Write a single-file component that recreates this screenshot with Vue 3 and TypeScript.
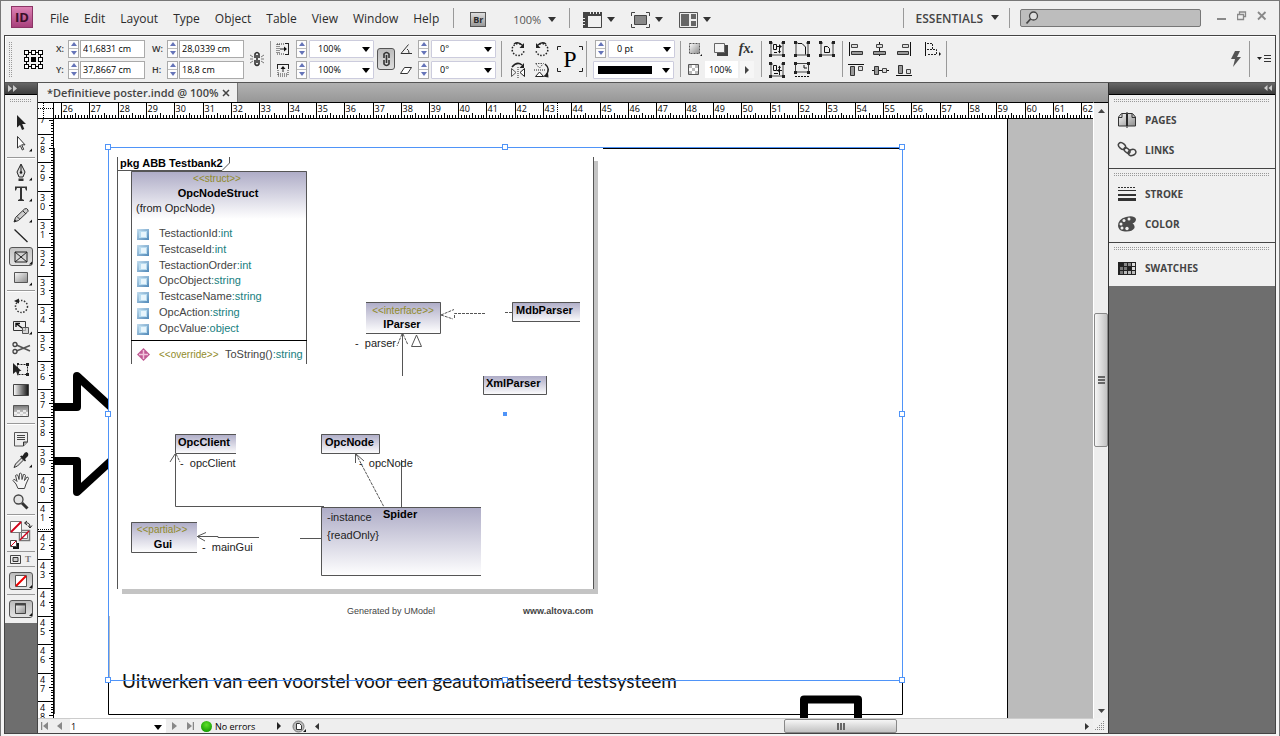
<script setup lang="ts">
import { computed, onMounted, onUnmounted, ref } from 'vue'

interface Tick { pos: number; label: string; kind: 'major' | 'half' | 'minor' }

const CM = 28.346

const viewW = ref(window.innerWidth - 242)
const viewH = ref(window.innerHeight - 138)
function measure() {
  viewW.value = window.innerWidth - 242
  viewH.value = window.innerHeight - 138
}
onMounted(() => window.addEventListener('resize', measure))
onUnmounted(() => window.removeEventListener('resize', measure))

function buildTicks(first: number, origin: number, extent: number): Tick[] {
  const out: Tick[] = []
  for (let i = 0; ; i++) {
    const pos = Math.round(origin + (i * CM) / 10) + 0.5
    if (pos > extent) return out
    if (pos < 0) continue
    out.push({
      pos,
      label: String(first + Math.floor(i / 10)),
      kind: i % 10 === 0 ? 'major' : i % 10 === 5 ? 'half' : 'minor',
    })
  }
}

const hTicks = computed(() => buildTicks(25, 7 - CM, viewW.value))
const vTicks = computed(() => buildTicks(27, 15 - CM, viewH.value))
const hMajor = computed(() => hTicks.value.filter((t) => t.kind === 'major'))
const vMajor = computed(() => vTicks.value.filter((t) => t.kind === 'major'))
const hLen = { major: 0, half: 10, minor: 12 }
const vLen = { major: 0, half: 11, minor: 13 }

const menus = ['File', 'Edit', 'Layout', 'Type', 'Object', 'Table', 'View', 'Window', 'Help']

const x = ref('41,6831 cm')
const y = ref('37,8667 cm')
const w = ref('28,0339 cm')
const h = ref('18,8 cm')

const toolGroups: { id: string; label: string; more?: boolean }[][] = [
  [{ id: 'select', label: 'Selection' }, { id: 'direct', label: 'Direct selection', more: true }],
  [
    { id: 'pen', label: 'Pen', more: true },
    { id: 'type', label: 'Type', more: true },
    { id: 'pencil', label: 'Pencil', more: true },
    { id: 'line', label: 'Line' },
    { id: 'frame', label: 'Rectangle frame', more: true },
    { id: 'rect', label: 'Rectangle', more: true },
  ],
  [
    { id: 'rotate', label: 'Rotate' },
    { id: 'scale', label: 'Scale', more: true },
    { id: 'scissors', label: 'Scissors' },
    { id: 'transform', label: 'Free transform' },
    { id: 'gradient', label: 'Gradient' },
    { id: 'feather', label: 'Gradient feather' },
  ],
  [
    { id: 'note', label: 'Note' },
    { id: 'eyedropper', label: 'Eyedropper', more: true },
    { id: 'hand', label: 'Hand' },
    { id: 'zoom', label: 'Zoom' },
  ],
]
const activeTool = ref('frame')

const panelGroups = [
  [{ id: 'pages', label: 'PAGES' }, { id: 'links', label: 'LINKS' }],
  [{ id: 'stroke', label: 'STROKE' }, { id: 'color', label: 'COLOR' }],
  [{ id: 'swatches', label: 'SWATCHES' }],
]

const fields = [
  { name: 'TestactionId', type: 'int' },
  { name: 'TestcaseId', type: 'int' },
  { name: 'TestactionOrder', type: 'int' },
  { name: 'OpcObject', type: 'string' },
  { name: 'TestcaseName', type: 'string' },
  { name: 'OpcAction', type: 'string' },
  { name: 'OpcValue', type: 'object' },
].map((f, i) => ({ ...f, y: Math.round(233 + i * 15.8) }))

const handles = [
  [108, 147], [505, 147], [902, 147], [108, 414], [902, 414], [108, 680], [505, 680], [902, 680],
]
const refPoints = [0, 1, 2].flatMap((r) => [0, 1, 2].map((c) => ({ c, r })))
</script>

<template>
  <div class="app">
    <svg class="defs" width="0" height="0" aria-hidden="true">
      <defs>
        <linearGradient id="gMetal" x1="0" y1="0" x2="1" y2="1"><stop offset="0" stop-color="#fafafa" /><stop offset="1" stop-color="#8c8c8c" /></linearGradient>
        <linearGradient id="gBw" x1="0" x2="1"><stop offset="0" stop-color="#fff" /><stop offset="1" stop-color="#111" /></linearGradient>
        <linearGradient id="gFade" x1="0" y1="0" x2="0" y2="1"><stop offset="0" stop-color="#777" /><stop offset="1" stop-color="#eee" /></linearGradient>
        <linearGradient id="gClass" x1="0" y1="0" x2="0" y2="1"><stop offset="0" stop-color="#adabc6" /><stop offset="1" stop-color="#fff" /></linearGradient>
        <linearGradient id="gField" x1="0" y1="0" x2="1" y2="1"><stop offset="0" stop-color="#c4deef" /><stop offset="1" stop-color="#4f88b8" /></linearGradient>
        <symbol id="caret" viewBox="0 0 8 6"><path d="M0 0H8L4 5Z" fill="currentColor" /></symbol>

        <symbol id="t-select" viewBox="0 0 24 20"><path d="M8 2V14.500L11 12L13 17L15.300 16L13.200 11H17Z" fill="#222" /></symbol>
        <symbol id="t-direct" viewBox="0 0 24 20"><path d="M8.500 2.500V14L11.300 11.500L13.300 16L14.700 15.300L12.700 10.800H16Z" fill="#fff" stroke="#333" /></symbol>
        <symbol id="t-pen" viewBox="0 0 24 20"><path d="M12 1L8 9L10 14H14L16 9Z" fill="#ddd" stroke="#222" /><path d="M12 2V9" stroke="#222" /><circle cx="12" cy="9.500" r="1.300" fill="#222" /><path d="M9.500 15.500H14.500V18H9.500Z" fill="#333" /></symbol>
        <symbol id="t-type" viewBox="0 0 24 20"><path d="M6 2.500H18V6.500H17L16 4H13V15L15 16V17H9V16L11 15V4H8L7 6.500H6Z" fill="#333" /></symbol>
        <symbol id="t-pencil" viewBox="0 0 24 20"><path d="M5 17L6.500 12.500L15.500 4Q18 2.500 19 5Q19.500 6.500 18 7.500L9.500 15.500Z" fill="#ccc" stroke="#333" /><path d="M14 6L17 9M8 11.500L10.500 14" stroke="#333" /><path d="M5 17L6 14.500L7.500 16Z" fill="#222" /></symbol>
        <symbol id="t-line" viewBox="0 0 24 20"><path d="M5.500 3.500L18.500 16" stroke="#222" stroke-width="1.300" /></symbol>
        <symbol id="t-frame" viewBox="0 0 24 20"><path d="M6 5H18V15H6ZM6 5L18 15M18 5L6 15" fill="none" stroke="#222" /></symbol>
        <symbol id="t-rect" viewBox="0 0 24 20"><path d="M5.500 4.500H18.500V14.500H5.500Z" fill="url(#gMetal)" stroke="#555" /></symbol>
        <symbol id="t-rotate" viewBox="0 0 24 20"><circle cx="12.500" cy="10.500" r="6" fill="none" stroke="#333" stroke-width="1.500" stroke-dasharray="1.500 1.500" /><path d="M5 5L10 2.500V7.500Z" fill="#222" /></symbol>
        <symbol id="t-scale" viewBox="0 0 24 20"><path d="M4.500 4.500H16.500V13.500H4.500Z" fill="#eee" stroke="#333" /><path d="M7 6.500L13 11M7 10V6.500H11" fill="none" stroke="#111" stroke-width="1.400" /><path d="M13.500 10.500H19.500V16.500H13.500Z" fill="#ccc" fill-opacity=".7" stroke="#555" /></symbol>
        <symbol id="t-scissors" viewBox="0 0 24 20"><path d="M7.500 7L21 13M7.500 13L21 7.500" stroke="#555" stroke-width="1.600" /><circle cx="6" cy="6.500" r="2" fill="none" stroke="#444" stroke-width="1.300" /><circle cx="6" cy="13.500" r="2" fill="none" stroke="#444" stroke-width="1.300" /></symbol>
        <symbol id="t-transform" viewBox="0 0 24 20"><path d="M8.500 5.500H18.500V15.500H8.500Z" fill="none" stroke="#222" stroke-dasharray="2 1" /><path d="M17 4h3v3h-3zM17 14h3v3h-3zM8 4h2v2H8z" fill="#222" /><path d="M4 4V15L7 12.500L9 17L10.500 12H12.500Z" fill="#222" /></symbol>
        <symbol id="t-gradient" viewBox="0 0 24 20"><path d="M4.500 4.500H19.500V15.500H4.500Z" fill="url(#gBw)" stroke="#444" /></symbol>
        <symbol id="t-feather" viewBox="0 0 24 20"><path d="M4.500 4.500H19.500V15.500H4.500Z" fill="url(#gFade)" stroke="#555" /><path d="M5 11h3v2H5zM11 11h3v2h-3zM17 11h2v2h-2zM8 13h3v2H8zM14 13h3v2h-3zM8 9h3v2H8zM14 9h3v2h-3z" fill="#fff" fill-opacity=".7" /></symbol>
        <symbol id="t-note" viewBox="0 0 24 20"><path d="M5.500 3.500H18.500V13L14.500 17H5.500Z" fill="#eee" stroke="#555" /><path d="M14.500 17V13H18.500" fill="#aaa" stroke="#333" /><path d="M8 6.500H16M8 8.500H16M8 10.500H16" stroke="#444" /></symbol>
        <symbol id="t-eyedropper" viewBox="0 0 24 20"><path d="M5 17.500L6.500 14L12.500 8L14.500 10L8.500 16Z" fill="#ddd" stroke="#333" /><path d="M11 6.500L16 11.500L17 10.500L16 9L19 6Q20 3 17.500 2Q15.500 2 14.500 4.500L13.500 6L12.500 5.500Z" fill="#222" /></symbol>
        <symbol id="t-hand" viewBox="0 0 24 20"><path d="M9 17.500L7 13L4 9.500Q4.500 7.500 6.500 9L8 10.500L6.500 4.500Q8 3 9 4.500L10 8.500L10.500 2.500Q12 1.500 12.700 3L13 8.500L14.500 3.500Q16 3 16.500 4.500L15.500 9.500L18 6Q19.500 6 19.500 7.500L17 13L15.500 17.500Z" fill="#f4f4f4" stroke="#444" /></symbol>
        <symbol id="t-zoom" viewBox="0 0 24 20"><circle cx="9.500" cy="7.500" r="4.500" fill="#e4e4e4" stroke="#444" stroke-width="1.300" /><path d="M13 11L18.500 16.500" stroke="#333" stroke-width="3" /></symbol>

        <symbol id="p-pages" viewBox="0 0 20 18"><path d="M1.500 15V6L4.500 2.500H9.500V15ZM18.500 15V6L15.500 2.500H10.500V15Z" fill="url(#gMetal)" stroke="#333" /><path d="M1.500 6.500H5V3M18.500 6.500H15V3" fill="none" stroke="#333" /><path d="M10 1V17" stroke="#222" /></symbol>
        <symbol id="p-links" viewBox="0 0 20 18"><g fill="none" stroke="#444" stroke-width="1.500"><ellipse cx="5" cy="5" rx="4" ry="2.800" transform="rotate(40 5 5)" /><ellipse cx="10" cy="9.500" rx="3.500" ry="2" transform="rotate(40 10 9.500)" /><ellipse cx="15" cy="11.500" rx="4" ry="3" transform="rotate(-20 15 11.500)" /></g></symbol>
        <symbol id="p-stroke" viewBox="0 0 20 18"><path d="M1 2.500H19" stroke="#333" stroke-dasharray="2 1" /><path d="M1 5.500H19" stroke="#333" /><path d="M1 10H19" stroke="#333" stroke-width="2" /><path d="M1 14.500H19" stroke="#333" stroke-width="3" /></symbol>
        <symbol id="p-color" viewBox="0 0 20 18"><path d="M1 11Q1 4 9 2Q17 0 19 4Q19 7 15.500 8.500Q18 10 17.500 13Q15 17 8 16.500Q1.500 16 1 11Z" fill="#4a4a4a" /><g fill="#eee"><circle cx="4" cy="9" r="1.500" /><circle cx="7" cy="5.500" r="1.500" /><circle cx="12" cy="4" r="1.500" /><circle cx="5" cy="13" r="1.500" /><circle cx="10" cy="13.500" r="1.700" /></g></symbol>
        <symbol id="p-swatches" viewBox="0 0 20 18"><path d="M1 3H19V16H1Z" fill="#222" /><path d="M7 4h3v3H7z M11 4h3v3h-3z" fill="#888" /><path d="M15 4h3v3h-3zM15 8h3v3h-3z" fill="#ddd" /><path d="M3 8h3v3H3zM7 8h3v3H7zM3 12h3v3H3z" fill="#777" /><path d="M7 12h3v3H7zM11 12h3v3h-3zM15 12h3v3h-3z" fill="#bbb" /></symbol>

        <symbol id="corners" viewBox="0 0 16 16"><path d="M2 2V14M14 2V14M2 2H4M12 2H14M2 14H14" fill="none" stroke="#444" /><path d="M0 0h3v3H0zM13 0h3v3h-3zM0 13h3v3H0zM13 13h3v3h-3z" fill="#222" /></symbol>
      </defs>
    </svg>

    <header class="menubar">
      <div class="logo"><span>ID</span></div>
      <nav class="menus" aria-label="Main menu">
        <button v-for="m in menus" :key="m" type="button">{{ m }}</button>
      </nav>
      <i class="vsep" />
      <button type="button" class="bridge">Br</button>
      <button type="button" class="zoomlevel">100% <svg class="caret"><use href="#caret" /></svg></button>
      <i class="vsep" />
      <button type="button" class="viewbtn" aria-label="View options">
        <svg width="19" height="16"><path d="M0 0H19V4H5V16H0Z" fill="#444" /><path d="M.5.500H18.500V15.500H.5Z" fill="none" stroke="#444" /><path d="M7.500 0V2M10.500 0V2M13.500 0V2M16.500 0V2M0 6.500H2M0 9.500H2M0 12.500H2" stroke="#eee" /></svg>
        <svg class="caret"><use href="#caret" /></svg>
      </button>
      <button type="button" class="viewbtn" aria-label="Screen mode">
        <svg width="19" height="16"><path d="M.5 4V.5H4M15 .5H18.500V4M18.500 12V15.500H15M4 15.500H.5V12" fill="none" stroke="#444" /><path d="M3.500 3.500H15.500V12.500H3.500Z" fill="#888" stroke="#444" /></svg>
        <svg class="caret"><use href="#caret" /></svg>
      </button>
      <button type="button" class="viewbtn" aria-label="Arrange documents">
        <svg width="19" height="16"><path d="M.5.500H18.500V15.500H.5Z" fill="#eee" stroke="#555" /><path d="M2 2H10V14H2ZM12 2H17V7H12ZM12 9H17V14H12Z" fill="#666" /></svg>
        <svg class="caret"><use href="#caret" /></svg>
      </button>
      <div class="grow" />
      <i class="vsep" />
      <button type="button" class="workspace-name">ESSENTIALS <svg class="caret"><use href="#caret" /></svg></button>
      <i class="vsep" />
      <label class="search">
        <svg width="14" height="14"><circle cx="8.500" cy="5" r="4" fill="#ddd" stroke="#444" stroke-width="1.300" /><path d="M5.500 8L1.500 12.500" stroke="#444" stroke-width="1.800" /></svg>
        <input type="search" aria-label="Search" />
      </label>
      <div class="winbtns">
        <button type="button" aria-label="Minimize"><svg width="10" height="10"><path d="M0 8H9" stroke="#888" stroke-width="2" /></svg></button>
        <button type="button" aria-label="Restore"><svg width="10" height="10"><path d="M2.500 3V1H8.500V5.500H7M.5 3.500H6.500V8.500H.5Z" fill="none" stroke="#888" stroke-width="1.300" /></svg></button>
        <button type="button" aria-label="Close"><svg width="10" height="10"><path d="M1 1L8.500 8.500M8.500 1L1 8.500" stroke="#888" stroke-width="1.800" /></svg></button>
      </div>
    </header>

    <div class="shell">
      <section class="control" aria-label="Control panel">
        <i class="grip-v" />
        <svg class="refpoint" width="19" height="19" shape-rendering="crispEdges">
          <path d="M2.500 2.500H16.500V16.500H2.500Z" fill="none" stroke="#000" />
          <rect v-for="p in refPoints" :key="`${p.c}${p.r}`" :x="p.c * 7 + 0.5" :y="p.r * 7 + 0.5" width="4" height="4" :fill="p.c === 1 && p.r === 1 ? '#000' : '#fff'" stroke="#000" />
        </svg>

        <div class="pair coords">
          <label for="fx">X:</label>
          <span class="spin"><button type="button" aria-label="Increase X" /><button type="button" aria-label="Decrease X" /></span>
          <input id="fx" v-model="x" />
          <label for="fy">Y:</label>
          <span class="spin"><button type="button" aria-label="Increase Y" /><button type="button" aria-label="Decrease Y" /></span>
          <input id="fy" v-model="y" />
        </div>
        <div class="pair coords size">
          <label for="fw">W:</label>
          <span class="spin"><button type="button" aria-label="Increase width" /><button type="button" aria-label="Decrease width" /></span>
          <input id="fw" v-model="w" />
          <label for="fh">H:</label>
          <span class="spin"><button type="button" aria-label="Increase height" /><button type="button" aria-label="Decrease height" /></span>
          <input id="fh" v-model="h" />
        </div>
        <button type="button" class="ico unlink" aria-label="Constrain proportions">
          <svg width="14" height="16"><path d="M5 7V3Q7 0 9 3V7M5 9V13Q7 16 9 13V9M7 4V12" fill="none" stroke="#333" stroke-width="1.600" /><path d="M0 4L3 6M14 4L11 6M0 12L3 10M14 12L11 10M0 8H3M11 8H14" stroke="#777" /></svg>
        </button>
        <i class="csep" />
        <div class="pair scale">
          <svg width="14" height="14"><path d="M1 2V12M3 2V12M1 2H9M1 12H9" stroke="#333" stroke-dasharray="1 1" /><path d="M12.500 1V13M4 7H10M9 1.500H13M9 12.500H13" stroke="#222" fill="none" /><path d="M8 4.500L11 7L8 9.500Z" fill="#111" /></svg>
          <span class="spin"><button type="button" aria-label="Increase X scale" /><button type="button" aria-label="Decrease X scale" /></span>
          <span class="drop"><select aria-label="X scale"><option>100%</option></select><svg class="dcaret"><use href="#caret" /></svg></span>
          <svg width="14" height="14"><path d="M2 7V13M12 7V13M2 13H12M2 11H12" stroke="#333" stroke-dasharray="1 1" /><path d="M1 1.500H13M7 4V9M1.500 1V6M12.500 1V6" stroke="#222" /><path d="M4.500 6L7 3L9.500 6Z" fill="#111" /></svg>
          <span class="spin"><button type="button" aria-label="Increase Y scale" /><button type="button" aria-label="Decrease Y scale" /></span>
          <span class="drop"><select aria-label="Y scale"><option>100%</option></select><svg class="dcaret"><use href="#caret" /></svg></span>
        </div>
        <button type="button" class="linkbtn" aria-label="Link scaling">
          <svg width="9" height="16"><path d="M2 7V3Q4.500 0 7 3V7M2 9V13Q4.500 16 7 13V9M4.500 4V12" fill="none" stroke="#333" stroke-width="1.600" /></svg>
        </button>
        <div class="pair angle">
          <svg width="14" height="14"><path d="M9.500 2.500L2 11.500H13M8 7Q10 8 10 11" fill="none" stroke="#333" /></svg>
          <span class="spin"><button type="button" aria-label="Increase rotation" /><button type="button" aria-label="Decrease rotation" /></span>
          <span class="drop"><select aria-label="Rotation"><option>0°</option></select><svg class="dcaret"><use href="#caret" /></svg></span>
          <svg width="14" height="14"><path d="M1.500 10.500L5.500 4.500H12.500L8.500 10.500Z" fill="#fff" stroke="#333" /></svg>
          <span class="spin"><button type="button" aria-label="Increase shear" /><button type="button" aria-label="Decrease shear" /></span>
          <span class="drop"><select aria-label="Shear"><option>0°</option></select><svg class="dcaret"><use href="#caret" /></svg></span>
        </div>
        <i class="csep" />
        <div class="pair icons2">
          <button type="button" class="ico" aria-label="Rotate clockwise"><svg width="16" height="16"><path d="M13 5A6 6 0 1 0 14 10" fill="none" stroke="#222" stroke-width="1.500" stroke-dasharray="1.500 1.500" /><path d="M4 3Q8 0 12 4" fill="none" stroke="#222" stroke-width="1.500" /><path d="M14 2V7H9.500Z" fill="#222" /></svg></button>
          <button type="button" class="ico" aria-label="Rotate counterclockwise"><svg width="16" height="16"><path d="M3 5A6 6 0 1 1 2 10" fill="none" stroke="#222" stroke-width="1.500" stroke-dasharray="1.500 1.500" /><path d="M12 3Q8 0 4 4" fill="none" stroke="#222" stroke-width="1.500" /><path d="M2 2V7H6.500Z" fill="#222" /></svg></button>
          <button type="button" class="ico" aria-label="Flip horizontal"><svg width="16" height="16"><path d="M2 5Q7-1 12 3" fill="none" stroke="#222" stroke-width="1.500" /><path d="M14 1V6H9.500Z" fill="#222" /><path d="M1.500 6.500V14.500L6 10.500Z" fill="none" stroke="#555" /><path d="M14.500 6.500V14.500L10 10.500Z" fill="#fff" stroke="#222" /><path d="M8 5V16" stroke="#222" stroke-dasharray="1 1" /></svg></button>
          <button type="button" class="ico" aria-label="Flip vertical"><svg width="16" height="16"><path d="M11 2Q17 7 12 13" fill="none" stroke="#222" stroke-width="1.500" /><path d="M9 14.500L14.500 15.500L14 10.500Z" fill="#222" /><path d="M1.500 1.500H9.500L5.500 6Z" fill="none" stroke="#555" stroke-dasharray="1.500 1" /><path d="M1.500 14.500H9.500L5.500 10Z" fill="#fff" stroke="#222" /><path d="M0 8H12" stroke="#222" stroke-dasharray="1 1" /></svg></button>
        </div>
        <div class="pbox"><svg width="26" height="26"><path d="M.5 4V.5H4M22 .5H25.500V4M25.500 22V25.500H22M4 25.500H.5V22" fill="none" stroke="#222" /></svg><span>P</span></div>
        <i class="csep" />
        <div class="strokes">
          <span class="row"><span class="spin"><button type="button" aria-label="Increase weight" /><button type="button" aria-label="Decrease weight" /></span>
            <span class="drop"><select aria-label="Stroke weight"><option>0 pt</option></select><svg class="dcaret"><use href="#caret" /></svg></span></span>
          <span class="drop wide"><select class="solid" aria-label="Stroke type"><option aria-label="Solid" /></select><svg class="dcaret"><use href="#caret" /></svg></span>
        </div>
        <i class="csep" />
        <div class="effects">
          <span class="row">
            <button type="button" class="ico" aria-label="Corner options"><svg width="16" height="16"><path d="M2.500 2.500H12.500V12.500H2.500Z" fill="url(#gMetal)" stroke="#555" stroke-dasharray="2 1" /><path d="M13 15H15V13Z" fill="#111" /></svg></button>
            <button type="button" class="ico" aria-label="Drop shadow"><svg width="16" height="16"><path d="M4 4H15V15H4Z" fill="#444" /><path d="M1.500 2.500H11.500V11.500H1.500Z" fill="#f4f4f4" stroke="#666" /></svg></button>
            <button type="button" class="ico fx" aria-label="Effects">fx<small>.</small></button>
          </span>
          <span class="row">
            <button type="button" class="ico" aria-label="Opacity"><svg width="16" height="16"><path d="M1.500 2.500H11.500V12.500H1.500Z" fill="#fff" stroke="#555" /><path d="M2 3h3v3H2zM8 3h3v3H8zM5 6h3v3H5zM2 9h3v3H2zM8 9h3v3H8z" fill="#bbb" /></svg></button>
            <input class="opacity" aria-label="Opacity value" value="100%" />
            <button type="button" class="ico oparrow" aria-label="Opacity slider"><svg width="5" height="8"><path d="M0 0L4 4L0 8Z" fill="#444" /></svg></button>
          </span>
        </div>
        <i class="csep" />
        <div class="pair icons3">
          <button type="button" class="ico" aria-label="Fill frame proportionally"><svg width="16" height="16"><use href="#corners" /><path d="M4.500 3.500H7.500V8.500H4.500ZM8 5.500H12M10.500 3.500V12M5 11.500H8" fill="none" stroke="#111" /><path d="M9 10L10.500 12.500L12 10ZM11 4L13 5.500L11 7Z" fill="#111" /></svg></button>
          <button type="button" class="ico" aria-label="Fit content to frame"><svg width="16" height="16"><use href="#corners" /><path d="M4 2.500H8L11.500 6V13.500" fill="none" stroke="#111" /></svg></button>
          <button type="button" class="ico" aria-label="Center content"><svg width="16" height="16"><use href="#corners" /><path d="M5.500 5.500H8.500L10.500 7.500V11.500H5.500Z" fill="#eee" stroke="#111" /></svg></button>
          <button type="button" class="ico" aria-label="Fit content proportionally"><svg width="16" height="16"><use href="#corners" /><path d="M4.500 3.500H7.500V8.500H4.500ZM8 8.500H13M10.500 4V13M5 11.500H9" fill="none" stroke="#111" /><path d="M9 6L10.500 3.500L12 6ZM10 7L8 8.500L10 10Z" fill="#111" /></svg></button>
          <button type="button" class="ico" aria-label="Fit frame to content"><svg width="16" height="16"><path d="M1.500 10V1.500H14.500V10Z" fill="#eee" stroke="#444" /><path d="M0 0h3v3H0zM13 0h3v3h-3zM0 9h3v3H0zM13 9h3v3h-3z" fill="#222" /><path d="M10 3V6H13" fill="none" stroke="#111" /><path d="M1 14.500H15" stroke="#111" stroke-dasharray="2 1" /></svg></button>
        </div>
        <i class="csep" />
        <div class="pair aligns">
          <button type="button" class="ico" aria-label="Align left"><svg width="16" height="16"><path d="M1.500 1V15" stroke="#111" /><path d="M3.500 3.500H9.500V6.500H3.500Z" fill="#ddd" stroke="#444" /><path d="M3.500 10.500H14.500V13.500H3.500Z" fill="#999" stroke="#333" /></svg></button>
          <button type="button" class="ico" aria-label="Align horizontal centers"><svg width="16" height="16"><path d="M7.500 1V15" stroke="#111" /><path d="M4.500 3.500H10.500V6.500H4.500Z" fill="#ddd" stroke="#444" /><path d="M1.500 10.500H13.500V13.500H1.500Z" fill="#999" stroke="#333" /></svg></button>
          <button type="button" class="ico" aria-label="Align right"><svg width="16" height="16"><path d="M14.500 1V15" stroke="#111" /><path d="M6.500 3.500H12.500V6.500H6.500Z" fill="#ddd" stroke="#444" /><path d="M1.500 10.500H12.500V13.500H1.500Z" fill="#999" stroke="#333" /></svg></button>
          <button type="button" class="ico" aria-label="Align to"><svg width="18" height="16"><path d="M1.500 1V15" stroke="#111" /><path d="M3 2.500H8.500V8M3 8.500H12.500V13.500H3" fill="none" stroke="#222" stroke-dasharray="2 1" /><path d="M15 11L17 13L15 15Z" fill="#111" /></svg></button>
          <button type="button" class="ico" aria-label="Align top"><svg width="16" height="16"><path d="M0 2.500H16" stroke="#111" /><path d="M2.500 4.500H6.500V13.500H2.500Z" fill="#999" stroke="#333" /><path d="M10.500 4.500H14.500V8.500H10.500Z" fill="#ddd" stroke="#444" /></svg></button>
          <button type="button" class="ico" aria-label="Align vertical centers"><svg width="17" height="16"><path d="M0 8.500H17" stroke="#111" /><path d="M2.500 4.500H6.500V12.500H2.500Z" fill="#999" stroke="#333" /><path d="M10.500 6.500H14.500V10.500H10.500Z" fill="#ddd" stroke="#444" /></svg></button>
          <button type="button" class="ico" aria-label="Align bottom"><svg width="16" height="16"><path d="M0 13.500H16" stroke="#111" /><path d="M2.500 3.500H6.500V11.500H2.500Z" fill="#999" stroke="#333" /><path d="M10.500 7.500H14.500V11.500H10.500Z" fill="#ddd" stroke="#444" /></svg></button>
        </div>
        <i class="csep" />
        <div class="grow" />
        <button type="button" class="ico bolt" aria-label="Quick apply"><svg width="12" height="16"><path d="M5 0L1 8L5 8L3 16L11 6H7L10 0Z" fill="#555" /></svg></button>
        <i class="csep" />
        <button type="button" class="ico flyout" aria-label="Panel menu"><svg width="15" height="10"><path d="M0 3H5L2.500 6Z" fill="#222" /><path d="M7 1.500H14M7 4.500H14M7 7.500H14" stroke="#333" /></svg></button>
      </section>

      <div class="body">
        <aside class="tools" aria-label="Tools">
          <div class="dark-head"><svg width="9" height="7"><path d="M0 0L4 3.500L0 7ZM5 0L9 3.500L5 7Z" fill="#ccc" /></svg></div>
          <div class="toolbox">
            <i class="grip-h" />
            <div v-for="(g, gi) in toolGroups" :key="gi" class="tgroup">
              <button v-for="t in g" :key="t.id" type="button" :class="{ active: activeTool === t.id }" :aria-label="t.label" @click="activeTool = t.id">
                <svg width="24" height="20"><use :href="`#t-${t.id}`" /><path v-if="t.more" d="M20 17.500H23V14.500Z" fill="#111" /></svg>
              </button>
            </div>
            <div class="fillbox">
              <svg width="24" height="30">
                <path d="M10.500 10.500H20.500V20.500H10.500Z" fill="#fff" stroke="#777" stroke-width="1.500" /><path d="M12.500 12.500H18.500V18.500H12.500Z" fill="#fff" stroke="#777" /><path d="M11 20L20 11" stroke="#d0021b" stroke-width="1.500" />
                <path d="M1.500 1.500H12.500V12.500H1.500Z" fill="#fff" stroke="#777" /><path d="M2 12L12 2" stroke="#d0021b" stroke-width="1.800" />
                <path d="M16 3Q21 2 21 7M19 5.500L21 8L23 5.500M18 1L15.500 3L18 5" fill="none" stroke="#222" />
                <path d="M4 23H10V29H4Z" fill="#111" /><path d="M1.500 20.500H7.500V26.500H1.500Z" fill="#fff" stroke="#444" /><path d="M2 26L7 21" stroke="#d0021b" />
              </svg>
            </div>
            <div class="modes">
              <button type="button" aria-label="Formatting affects container"><svg width="11" height="9"><path d="M.5.500H10.500V8.500H.5Z" fill="none" stroke="#444" /><path d="M3 2.500H8V6.500H3Z" fill="#ccc" stroke="#333" /></svg></button>
              <button type="button" class="tmode">T</button>
            </div>
            <div class="big"><button type="button" aria-label="Apply none"><svg width="24" height="18"><path d="M6.500 3.500H17.500V14.500H6.500Z" fill="#fff" stroke="#555" /><path d="M7 14L17 4" stroke="#e00" stroke-width="2" /><path d="M20 16H23V13Z" fill="#111" /></svg></button></div>
            <div class="big"><button type="button" aria-label="View mode"><svg width="24" height="18"><path d="M6.500 3.500H16.500V13.500H6.500Z" fill="url(#gMetal)" stroke="#444" /><path d="M6 4.500H17" stroke="#444" stroke-width="2" /><path d="M20 16H23V13Z" fill="#111" /></svg></button></div>
          </div>
        </aside>

        <main class="doc">
          <div class="tabs">
            <div class="tab"><span>*Definitieve poster.indd @ 100%</span><button type="button" aria-label="Close document"><svg width="8" height="8"><path d="M1 1L7 7M7 1L1 7" stroke="#444" stroke-width="1.500" /></svg></button></div>
          </div>
          <div class="viewgrid">
            <svg class="corner" shape-rendering="crispEdges"><path d="M5.500 0V16M0 5.500H15" stroke="#000" stroke-dasharray="1 1" /></svg>
            <svg class="hruler">
              <path v-for="(t, i) in hTicks" :key="i" :d="`M${t.pos} ${hLen[t.kind]}V15`" stroke="#000" />
              <text v-for="t in hMajor" :key="t.label" :x="t.pos + 1" y="9">{{ t.label }}</text>
              <path d="M503.500 0V16" stroke="#000" stroke-dasharray="1 1" />
            </svg>
            <div class="vscroll">
              <button type="button" aria-label="Scroll up"><svg width="7" height="4"><path d="M0 4L3.500 0L7 4Z" fill="#444" /></svg></button>
              <div class="track"><span class="thumb"><i /><i /><i /></span></div>
              <button type="button" aria-label="Scroll down"><svg width="7" height="4"><path d="M0 0H7L3.500 4Z" fill="#444" /></svg></button>
            </div>
            <svg class="vruler">
              <path v-for="(t, i) in vTicks" :key="i" :d="`M${vLen[t.kind]} ${t.pos}H15`" stroke="#000" />
              <text x="2" y="4">7</text>
              <template v-for="t in vMajor" :key="t.label">
                <text x="2" :y="t.pos + 9">{{ t.label[0] }}</text>
                <text x="2" :y="t.pos + 18">{{ t.label[1] }}</text>
              </template>
              <path d="M0 410.500H15" stroke="#000" stroke-dasharray="1 1" />
            </svg>

            <svg class="canvas">
              <defs><clipPath id="leftClip"><rect x="54" y="119" width="54" height="600" /></clipPath></defs>
              <g transform="translate(-54 -119)">
                <rect x="54" y="119" width="953" height="1200" fill="#fff" />
                <path d="M1007.500 119V1300" stroke="#000" />
                <path d="M54.500 148V714" stroke="#444" />
                <path d="M603 148H903" stroke="#000" stroke-width="2" />
                <path d="M902.500 148V714.500H108.500V680" fill="none" stroke="#000" />
                <path d="M109.500 616V680" stroke="#bbb" />
                <g clip-path="url(#leftClip)" fill="none" stroke="#000" stroke-width="8" stroke-linejoin="round">
                  <path d="M50 407H77V376L112 408" /><path d="M50 461H77V492L112 460" />
                </g>
                <path d="M804 722V699.500H858V722" fill="none" stroke="#000" stroke-width="8" stroke-linejoin="round" />

                <path d="M594 161H598V594H122V589H594Z" fill="#c4c4c4" />
                <path class="thin" d="M117.500 157V589M593.500 157V589M117 170.500H222L229.500 163V157" />
                <text class="b" x="120" y="167">pkg ABB Testbank2</text>

                <rect x="131" y="171" width="176" height="48" fill="url(#gClass)" />
                <path class="thin" d="M131.500 364V171.500H306.500V364" />
                <path d="M131 340.500H307" stroke="#000" />
                <text class="olive mid" x="217" y="182">&lt;&lt;struct&gt;&gt;</text>
                <text class="b mid" x="218" y="197">OpcNodeStruct</text>
                <text x="136" y="212">(from OpcNode)</text>
                <g v-for="f in fields" :key="f.name">
                  <rect x="137" :y="f.y - 4" width="12" height="11" fill="url(#gField)" />
                  <rect x="139" :y="f.y - 2" width="8" height="7" fill="#b9dcf0" />
                  <rect x="141" :y="f.y - 1" width="5" height="5" fill="#e8f5fc" />
                  <text class="name" x="159" :y="f.y + 4">{{ f.name }}<tspan class="teal">:{{ f.type }}</tspan></text>
                </g>
                <path d="M143.500 348L150 354.500L143.500 361L137 354.500Z" fill="#c05a94" /><path d="M143.500 350V359M139 354.500H148" stroke="#f2c4dc" stroke-width="1.500" />
                <text class="olive" x="159" y="358">&lt;&lt;override&gt;&gt;</text>
                <text class="name" x="225" y="358">ToString()<tspan class="teal">:string</tspan></text>

                <rect x="366" y="302" width="75" height="31" fill="url(#gClass)" />
                <path class="thin" d="M366 302.500H440.500V333.500H366" />
                <text class="olive mid" x="403" y="314">&lt;&lt;interface&gt;&gt;</text>
                <text class="b mid" x="402" y="328">IParser</text>
                <path class="thin dash" d="M485 313.500H454.500V319M441 315L454 309.500M441 315L453 319M505 312.500H512" />
                <rect x="512" y="302" width="68" height="20" fill="url(#gClass)" />
                <path class="thin" d="M580 302.500H512.500V321.500H580" />
                <text class="b" x="516" y="314">MdbParser</text>
                <path class="thin" d="M402.500 334V376M416.500 335L411.500 346.500H421.500Z" />
                <path class="thin dash" d="M402 334L397 346M403 334L408 345" />
                <text x="355" y="347">-&nbsp; parser</text>
                <rect x="483" y="376" width="64" height="19" fill="url(#gClass)" />
                <path class="thin" d="M483.500 376V394.500H546.500V376" />
                <text class="b" x="486" y="387">XmlParser</text>

                <rect x="175" y="434" width="61" height="20" fill="url(#gClass)" />
                <path class="thin" d="M236 434.500H175.500V453.500H236" />
                <text class="b" x="178" y="446">OpcClient</text>
                <path class="thin" d="M175.500 454V506.500H324M175 454L170 462" />
                <path class="thin dash" d="M176 454L180 462" />
                <text x="180" y="467">-&nbsp; opcClient</text>
                <rect x="321" y="434" width="58" height="20" fill="url(#gClass)" />
                <path class="thin" d="M321.500 434.500H379.500V453.500H321.500Z" />
                <text class="b" x="325" y="446">OpcNode</text>
                <path class="thin" d="M355.500 454V463M356 454L364 461M401.500 460V507" />
                <path class="thin dash" d="M356 454L384 507" />
                <text x="359" y="467">-&nbsp; opcNode</text>

                <rect x="321" y="507" width="160" height="69" fill="url(#gClass)" />
                <path class="thin" d="M481 507.500H321.500V575.500H481" />
                <text x="327" y="521">-instance</text>
                <text class="b" x="383" y="518">Spider</text>
                <text x="327" y="539">{readOnly}</text>

                <rect x="131" y="522" width="66" height="31" fill="url(#gClass)" />
                <path class="thin" d="M197 522.500H131.500V552.500H197" />
                <text class="olive mid" x="162" y="533">&lt;&lt;partial&gt;&gt;</text>
                <text class="b mid" x="163" y="548">Gui</text>
                <path class="thin" d="M197 536.500H218V537.500H259M198 536L206 532.500M198 537L205 541M300 538.500H321" />
                <text x="202" y="551">-&nbsp; mainGui</text>
                <text class="foot" x="347" y="614">Generated by UModel</text>
                <text class="foot fb" x="523" y="614">www.altova.com</text>

                <text class="poster" x="122" y="688">Uitwerken van een voorstel voor een geautomatiseerd testsysteem</text>

                <g shape-rendering="crispEdges">
                  <rect x="108.500" y="147.500" width="794" height="533" fill="none" stroke="#4f94f8" />
                  <rect v-for="([hx, hy], i) in handles" :key="i" :x="hx - 2.5" :y="hy - 2.5" width="5" height="5" fill="#fff" stroke="#4f94f8" />
                  <rect x="503" y="412" width="4" height="4" fill="#4f94f8" />
                </g>
              </g>
            </svg>

            <footer class="status">
              <button type="button" aria-label="First page"><svg width="8" height="8"><path d="M.5 0V8" stroke="#888" stroke-width="1.500" /><path d="M7 0V8L2 4Z" fill="#888" /></svg></button>
              <button type="button" aria-label="Previous page"><svg width="6" height="8"><path d="M5 0V8L0 4Z" fill="#888" /></svg></button>
              <span class="drop page"><select aria-label="Page"><option>1</option></select><svg class="dcaret"><use href="#caret" /></svg></span>
              <button type="button" aria-label="Next page"><svg width="6" height="8"><path d="M0 0V8L5 4Z" fill="#888" /></svg></button>
              <button type="button" aria-label="Last page"><svg width="8" height="8"><path d="M7.500 0V8" stroke="#888" stroke-width="1.500" /><path d="M1 0V8L6 4Z" fill="#888" /></svg></button>
              <i class="dot" /><span class="errors">No errors</span>
              <button type="button" class="play" aria-label="Preflight menu"><svg width="5" height="8"><path d="M0 0V8L4 4Z" fill="#222" /></svg></button>
              <button type="button" class="structure" aria-label="Version status"><svg width="15" height="13"><circle cx="6.500" cy="6.500" r="5.500" fill="#bbb" stroke="#777" /><path d="M4.500 3.500H7.500L9.500 5.500V9.500H4.500Z" fill="#fff" stroke="#333" /><path d="M11 12H14V9Z" fill="#111" /></svg></button>
              <div class="hscroll">
                <button type="button" aria-label="Scroll left"><svg width="4" height="7"><path d="M4 0V7L0 3.500Z" fill="#333" /></svg></button>
                <div class="track"><span class="thumb"><i /><i /><i /></span></div>
                <button type="button" aria-label="Scroll right"><svg width="4" height="7"><path d="M0 0V7L4 3.500Z" fill="#333" /></svg></button>
              </div>
            </footer>
            <svg class="resize" width="15" height="15"><path d="M10.500 3V12M8.500 5V12M6.500 7V12M4.500 9V12M2.500 11V12" stroke="#888" stroke-dasharray="1 1" /></svg>
          </div>
        </main>

        <aside class="dock" aria-label="Panels">
          <div class="dark-head right"><svg width="8" height="6"><path d="M3.500 0V6L0 3ZM8 0V6L4.500 3Z" fill="#ccc" /></svg></div>
          <div v-for="(g, gi) in panelGroups" :key="gi" class="pgroup">
            <i class="grip-h" />
            <button v-for="p in g" :key="p.id" type="button"><svg width="20" height="18"><use :href="`#p-${p.id}`" /></svg>{{ p.label }}</button>
          </div>
        </aside>
      </div>
    </div>
  </div>
</template>

<style>
html, body { margin: 0; background: #f0f0f0; }
</style>

<style scoped>
* { box-sizing: border-box; }
.app { height: 100vh; min-width: 1100px; display: flex; flex-direction: column; background: #f4f4f4; border: 1px solid #777; border-bottom: 0; font-family: "Open Sans", "Noto Sans", sans-serif; font-size: 9px; color: #000; overflow: hidden; }
.defs { position: absolute; }
button { border: 0; padding: 0; margin: 0; background: none; font: inherit; color: inherit; display: block; }
button svg, .caret, .dcaret { display: block; }
input, select { font: inherit; color: inherit; margin: 0; min-width: 0; border-radius: 0; outline: 0; }
.grow { flex: 1; }
.caret { width: 8px; height: 6px; color: #333; }

.menubar { height: 34px; flex: none; display: flex; align-items: center; background: #f0f0f0; padding: 0 12px 0 10px; color: #2b2b2b; }
.logo { width: 22px; height: 22px; margin: 0 17px 3px 0; background: linear-gradient(#dd82b4, #a8407c); border: 1px solid #8c3566; display: flex; align-items: center; justify-content: center; font-size: 13px; font-weight: 700; color: #3a1029; }
.menus { display: flex; gap: 15px; font-size: 12px; margin-right: 14px; }
.vsep { width: 1px; height: 20px; background: #999; flex: none; }
.bridge { width: 16px; height: 15px; margin: 3px 0 0 16px; border: 1px solid #555; background: linear-gradient(#ddd, #999); font-size: 9px; font-weight: 700; line-height: 13px; }
.zoomlevel { display: flex; align-items: center; gap: 7px; margin: 3px 13px 0 27px; font-size: 11px; color: #555; }
.viewbtn { display: flex; align-items: center; gap: 5px; margin: 3px 0 0 16px; }
.vsep + .viewbtn { margin-left: 13px; }
.workspace-name { display: flex; align-items: center; gap: 8px; margin: 0 10px 0 12px; font-size: 12px; font-weight: 600; color: #444; }
.search { width: 181px; height: 18px; margin: 0 16px 1px 10px; border: 1px solid #777; border-radius: 2px; background: #bdbdbd; display: flex; align-items: center; padding: 0 4px; }
.search input { border: 0; background: none; flex: 1; appearance: none; }
.winbtns { display: flex; gap: 10px; margin-bottom: 5px; }

.shell { flex: 1; min-height: 0; margin: 0 3px 2px; border: 1px solid #444; display: flex; flex-direction: column; }
.control { height: 47px; flex: none; border-bottom: 1px solid #555; background: #f0f0f0; display: flex; align-items: center; box-shadow: inset 1px 1px #fff; }
.grip-v, .grip-h { display: block; flex: none; background: repeating-linear-gradient(transparent 0 1px, #f0f0f0 1px 2px), repeating-linear-gradient(90deg, #999 0 1px, transparent 1px 2px); }
.grip-v { width: 3px; height: 35px; margin: 0 12px 0 4px; }
.refpoint { flex: none; margin-right: 13px; }
.pair { display: grid; grid-template-rows: 19px 19px; row-gap: 2px; align-items: center; flex: none; }
.coords { grid-template-columns: 12px 11px 67px; margin-right: 5px; }
.coords label { color: #333; font-size: 9px; font-weight: 600; }
.coords input { margin-left: 1px; width: 65px; height: 18px; border: 1px solid #aaa; background: #fff; padding: 0 2px; }
.size { grid-template-columns: 15px 11px 67px; margin: 0 5px 0 1px; }
.spin { display: flex; flex-direction: column; width: 11px; height: 18px; border: 1px solid #aaa; background: #fdfdfd; flex: none; }
.spin button { flex: 1; display: flex; align-items: center; justify-content: center; }
.spin button + button { border-top: 1px solid #bbb; }
.spin button::before { content: ""; border: 3px solid transparent; border-top: 0; border-bottom: 4px solid #6574b8; }
.spin button + button::before { border-bottom: 0; border-top: 4px solid #6574b8; }
.csep { width: 1px; height: 36px; background: #999; flex: none; }
.ico { display: flex; align-items: center; justify-content: center; flex: none; }
.unlink { margin: 0 6px 0 0; }
.drop { display: grid; width: 65px; height: 18px; align-items: center; }
.drop > * { grid-area: 1 / 1; }
.drop select { appearance: none; width: 100%; height: 100%; border: 1px solid #ccd; background: #fff; padding: 0 0 0 8px; border-radius: 1px; }
.dcaret { width: 8px; height: 6px; justify-self: end; margin: 3px 4px 0 0; pointer-events: none; }
.scale { grid-template-columns: 20px 13px 65px; margin: 0 3px 0 5px; }
.linkbtn { width: 18px; height: 22px; border: 1px solid #555; border-radius: 3px; background: linear-gradient(#bbb, #ddd); display: flex; align-items: center; justify-content: center; flex: none; }
.angle { grid-template-columns: 19px 13px 65px; margin: 0 5px 0 4px; }
.icons2 { grid-template-columns: 24px 16px; margin: 0 7px 0 8px; }
.icons2 .ico, .icons3 .ico, .aligns .ico { justify-content: flex-start; }
.pbox { display: grid; place-items: center; width: 26px; margin-right: 3px; font: 24px/26px "Liberation Serif", serif; flex: none; }
.pbox > * { grid-area: 1 / 1; }
.strokes, .effects { display: grid; grid-template-rows: 19px 19px; row-gap: 2px; align-items: center; flex: none; }
.row { display: flex; align-items: center; }
.strokes { margin: 0 5px 0 6px; }
.strokes .row { gap: 2px; padding-left: 2px; }
.strokes .row .drop { width: 67px; }
.strokes .wide { width: 81px; }
.drop .solid { background: linear-gradient(#000, #000) 4px center / 54px 8px no-repeat #fff; }
.effects { margin: 0 7px 0 6px; width: 67px; }
.effects .row { justify-content: space-between; }
.fx { font: italic 700 14px/16px "Liberation Serif", serif; color: #333; }
.fx small { font-size: 14px; }
.opacity { width: 33px; height: 17px; border: 0; background: #fff; padding: 0 0 0 4px; }
.oparrow { width: 14px; height: 17px; background: #f6f6f6; }
.icons3 { grid-template-columns: 25px 25px 17px; margin: 0 6px 0 7px; }
.aligns { grid-template-columns: 24px 24px 28px 18px; margin: 0 4px 0 5px; }
.aligns .ico:nth-child(5) { grid-row: 2; }
.bolt { margin-right: 7px; }
.flyout { margin: 0 3px 0 7px; }

.body { flex: 1; min-height: 0; display: flex; }
.tools { width: 33px; flex: none; background: #6e6e6e; border-right: 1px solid #444; }
.dark-head { height: 12px; background: linear-gradient(#666, #3c3c3c); border-bottom: 1px solid #000; padding: 2px 3px 0; display: flex; }
.dark-head.right { justify-content: flex-end; }
.toolbox { background: #f0f0f0; width: 32px; padding-top: 4px; height: 528px; }
.grip-h { height: 3px; margin: 0 5px 1px; }
.tgroup { padding: 4px 0 2px; border-bottom: 1px solid #999; margin: 0 2px; box-shadow: 0 1px #fff; }
.grip-h + .tgroup { padding: 9px 0 3px; }
.tgroup button { width: 24px; height: 21px; margin: 0 auto; border: 1px solid transparent; border-radius: 3px; display: flex; align-items: center; justify-content: center; }
.tgroup button svg { flex: none; }
.tgroup .active { height: 19px; margin: 1px auto; border-color: #555; background: linear-gradient(#c4c4c4, #e2e2e2); }
.fillbox { height: 37px; margin: 0 2px; padding: 5px 2px 0; border-bottom: 1px solid #999; }
.modes { height: 15px; margin: 0 2px; border-bottom: 1px solid #999; display: flex; align-items: center; justify-content: space-between; padding: 0 4px 0 3px; }
.tmode { font: 700 9px/12px "Liberation Serif", serif; color: #777; }
.big { height: 28px; margin: 0 2px; border-bottom: 1px solid #999; display: flex; align-items: center; justify-content: center; }
.big:last-child { border: 0; }
.big button { border: 1px solid #555; border-radius: 3px; background: linear-gradient(#bbb, #e2e2e2); height: 18px; width: 24px; display: flex; align-items: center; justify-content: center; }
.big svg { flex: none; }

.doc { flex: 1; min-width: 0; display: flex; flex-direction: column; }
.tabs { height: 19px; flex: none; background: linear-gradient(#b2b2b2, #979797); display: flex; }
.tab { display: flex; align-items: center; gap: 4px; padding: 0 7px 0 9px; background: #f0f0f0; border-right: 1px solid #777; font-size: 11px; font-weight: 600; color: #444; white-space: nowrap; }
.viewgrid { flex: 1; min-height: 0; display: grid; grid-template: 17px minmax(0, 1fr) 15px / 16px minmax(0, 1fr) 15px; background: #f0f0f0; }
.viewgrid > svg { display: block; width: 100%; height: 100%; }
.corner, .hruler { background: #fff; border-top: 1px solid #000; border-bottom: 1px solid #000; }
.corner, .vruler { border-right: 1px solid #000; background: #fff; }
.hruler text, .vruler text { font-size: 9px; }
.hruler path, .vruler path { shape-rendering: crispEdges; }
.vscroll { grid-area: 1 / 3 / 3 / 4; display: flex; flex-direction: column; border-left: 1px solid #fff; background: #eee; border-top: 1px solid #000; }
.vscroll > button { height: 15px; flex: none; display: flex; align-items: center; justify-content: center; }
.vruler { grid-area: 2 / 1; }
.canvas { grid-area: 2 / 2; background: #bbb; overflow: hidden; }
.track { flex: 1; min-width: 0; min-height: 0; display: flex; }
.vscroll .track { flex-direction: column; padding-top: 195px; }
.thumb { display: flex; align-items: center; justify-content: center; gap: 1px; border: 1px solid #888; border-radius: 2px; }
.vscroll .thumb { flex-direction: column; height: 134px; background: linear-gradient(90deg, #f6f6f6, #c2c2c2); }
.vscroll .thumb i { width: 7px; height: 2px; background: #666; }
.hscroll .thumb { width: 113px; margin-left: 461px; background: linear-gradient(#f6f6f6, #c2c2c2); }
.hscroll .thumb i { width: 2px; height: 7px; background: #666; }
.status { grid-area: 3 / 1 / 4 / 3; display: flex; align-items: center; background: #eee; font-size: 9px; border-top: 1px solid #ccc; padding-left: 3px; }
.status button { flex: none; }
.status > button + button { margin-left: 8px; }
.status .drop { width: 96px; height: 14px; margin: 0 6px 0 7px; }
.status .drop select { padding-left: 1px; border: 0; }
.status .dot { width: 11px; height: 11px; border-radius: 50%; margin: 0 3px 0 7px; background: radial-gradient(circle at 50% 35%, #5fe02a, #139a00 80%); flex: none; }
.errors { width: 62px; white-space: nowrap; }
.status .structure { margin: 0 4px 0 10px; }
.hscroll { flex: 1; min-width: 0; display: flex; align-self: stretch; background: #eee; }
.hscroll > button { width: 12px; display: flex; align-items: center; justify-content: center; }
.resize { grid-area: 3 / 3; }

.canvas text { font-family: "Liberation Sans", Arial, sans-serif; font-size: 11px; fill: #222; }
.canvas .b { font-weight: 700; fill: #000; }
.canvas .mid { text-anchor: middle; }
.canvas .olive { fill: #918b2c; font-size: 10px; }
.canvas .teal { fill: #178080; }
.canvas .name { fill: #444; }
.canvas .foot { font-size: 9px; fill: #444; }
.canvas .fb { font-weight: 700; }
.canvas .poster { font-family: Lato, "Open Sans", sans-serif; font-size: 19px; fill: #111; }
.thin { fill: none; stroke: #555; }
.dash { stroke-dasharray: 3 1; }

.dock { width: 167px; flex: none; border-left: 1px solid #333; background: #6e6e6e; }
.pgroup { background: #f0f0f0; padding: 4px 0 3px; border-bottom: 1px solid #444; }
.pgroup:last-child { border-bottom: 0; }
.pgroup .grip-h { margin-bottom: 3px; }
.pgroup button { height: 30px; width: 100%; display: flex; align-items: center; gap: 8px; padding-left: 8px; font-size: 10px; font-weight: 700; color: #444; }
</style>
